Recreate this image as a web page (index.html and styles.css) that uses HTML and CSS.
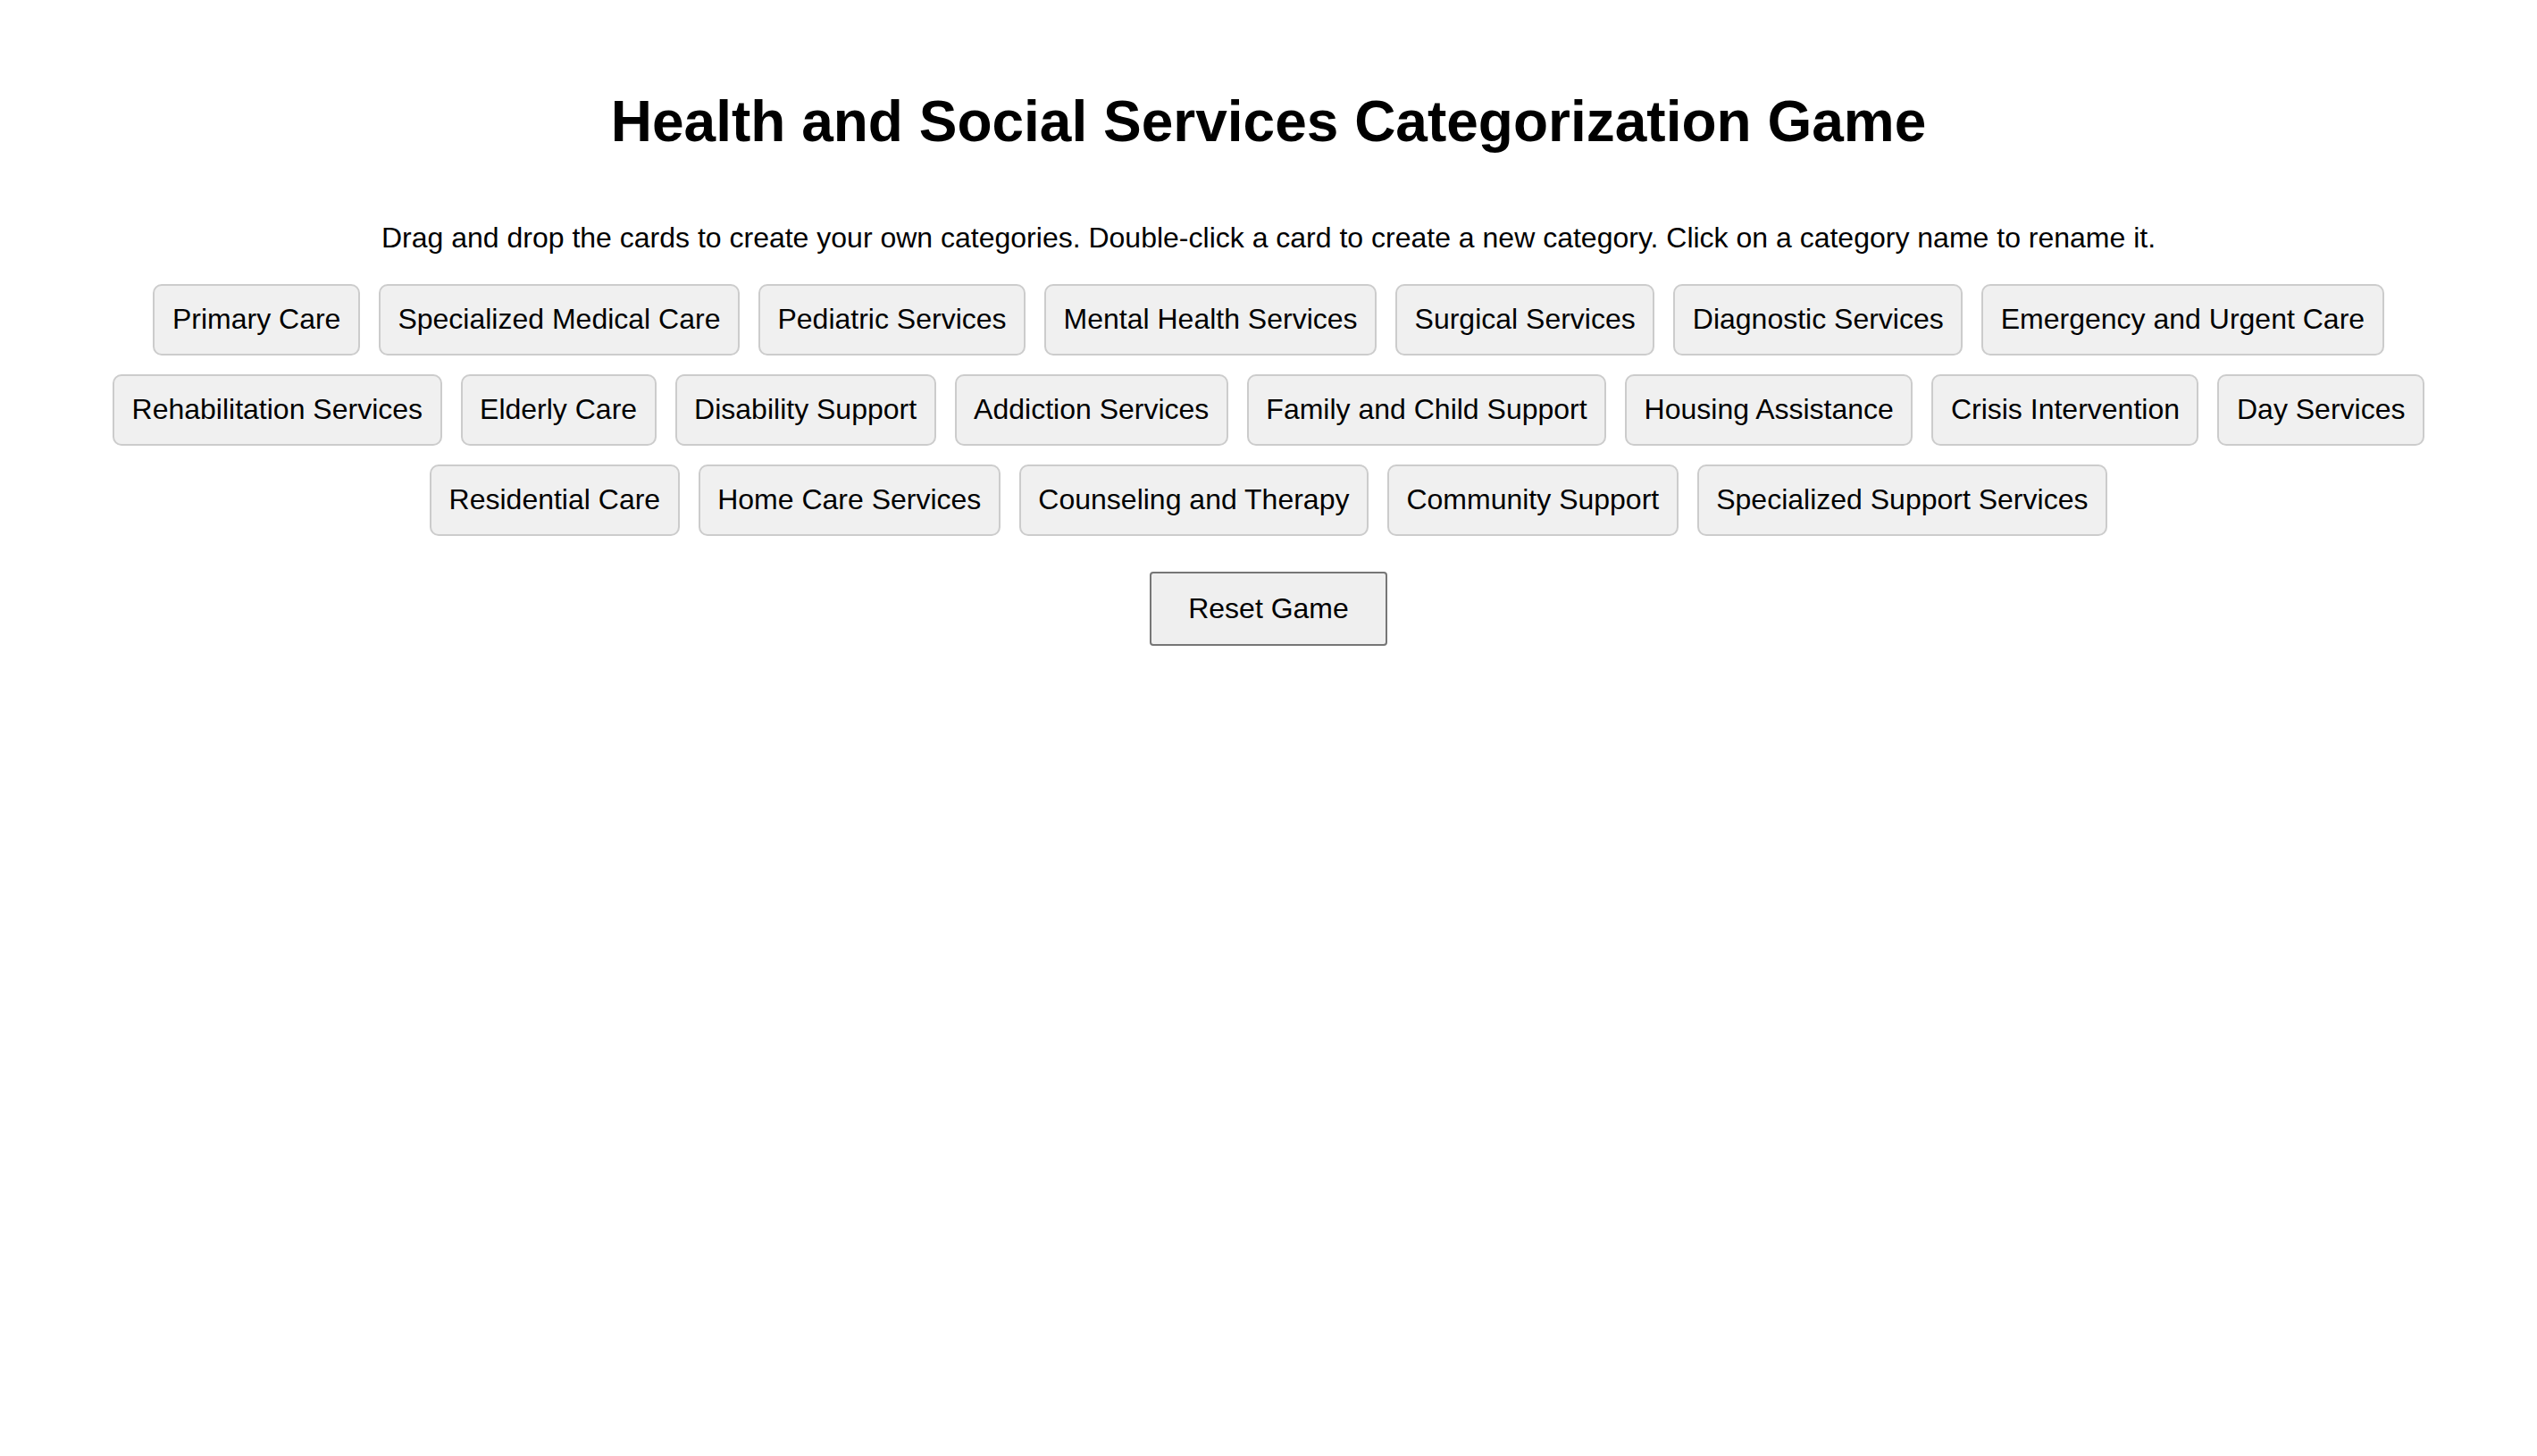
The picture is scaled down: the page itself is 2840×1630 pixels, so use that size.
FILE: index.html
```html
<!DOCTYPE html>
<html lang="en">
<head>
<meta charset="utf-8">
<title>Health and Social Services Categorization Game</title>
<link rel="stylesheet" href="styles.css">
</head>
<body>
<h1 class="title">Health and Social Services Categorization Game</h1>
<p class="intro">Drag and drop the cards to create your own categories. Double-click a card to create a new category. Click on a category name to rename it.</p>
<div class="cards">
  <div class="card">Primary Care</div>
  <div class="card">Specialized Medical Care</div>
  <div class="card">Pediatric Services</div>
  <div class="card">Mental Health Services</div>
  <div class="card">Surgical Services</div>
  <div class="card">Diagnostic Services</div>
  <div class="card">Emergency and Urgent Care</div>
  <div class="card">Rehabilitation Services</div>
  <div class="card">Elderly Care</div>
  <div class="card">Disability Support</div>
  <div class="card">Addiction Services</div>
  <div class="card">Family and Child Support</div>
  <div class="card">Housing Assistance</div>
  <div class="card">Crisis Intervention</div>
  <div class="card">Day Services</div>
  <div class="card">Residential Care</div>
  <div class="card">Home Care Services</div>
  <div class="card">Counseling and Therapy</div>
  <div class="card">Community Support</div>
  <div class="card">Specialized Support Services</div>
</div>
<button class="reset" type="button">Reset Game</button>
</body>
</html>
```
FILE: styles.css
```css
html {
  background: #ffffff;
}

body {
  margin: 16px;
  padding: 40px;
  font-family: "Liberation Sans", Arial, Helvetica, sans-serif;
  color: #000000;
  display: flex;
  flex-direction: column;
  align-items: center;
}

.title {
  font-size: 64px;
  font-weight: bold;
  margin: 42.88px 0;
  text-align: center;
}

.intro {
  font-size: 32px;
  margin: 32px 0;
  text-align: center;
}

.cards {
  align-self: stretch;
  display: flex;
  flex-wrap: wrap;
  justify-content: center;
  gap: 21px 21px;
  margin-top: 1px;
}

.card {
  font-size: 32px;
  padding: 19.5px 19.5px;
  border: 2px solid #cccccc;
  border-radius: 10px;
  background: #f0f0f0;
  white-space: nowrap;
}

.reset {
  margin-top: 40px;
  font-family: "Liberation Sans", Arial, Helvetica, sans-serif;
  font-size: 32px;
  color: #000000;
  padding: 21px 41.5px;
  border: 2px solid #767676;
  border-radius: 4px;
  background: #efefef;
}
```
